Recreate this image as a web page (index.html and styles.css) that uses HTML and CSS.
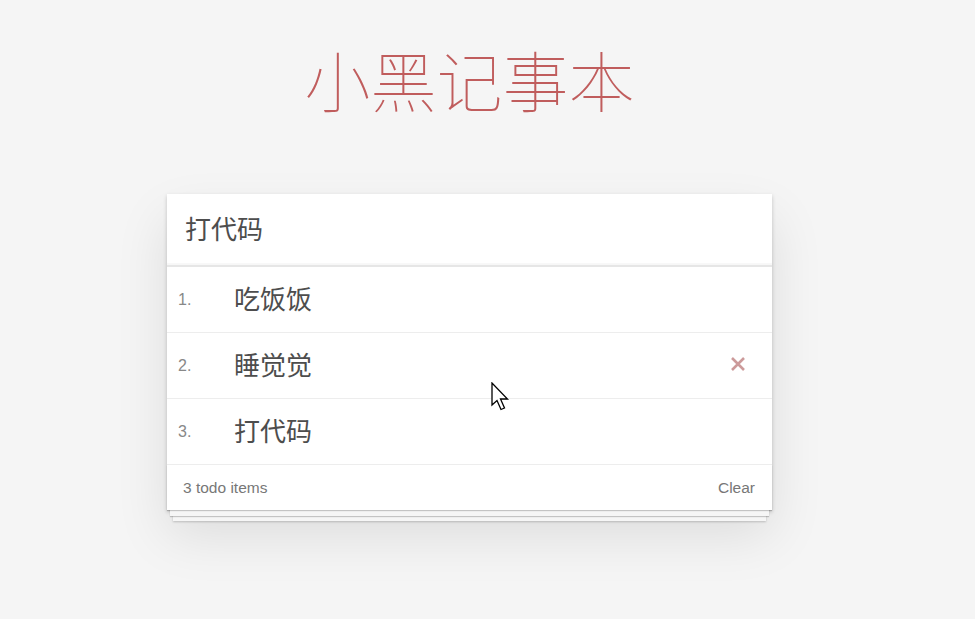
FILE: index.html
```html
<!DOCTYPE html>
<html lang="zh-CN">
<head>
<meta charset="utf-8">
<title>小黑记事本</title>
<link rel="stylesheet" href="styles.css">
</head>
<body>
<main class="app">
  <header class="header">
    <h1 class="title">小黑记事本</h1>
  </header>
  <section class="card">
    <div class="new-todo">打代码</div>
    <ul class="list">
      <li class="item"><span class="index">1.</span><span class="label">吃饭饭</span></li>
      <li class="item"><span class="index">2.</span><span class="label">睡觉觉</span>
        <span class="destroy"><svg width="16" height="16" viewBox="0 0 16 16"><path d="M2 2 L14 14 M14 2 L2 14" stroke="#cc9a9a" stroke-width="2.6" fill="none"/></svg></span>
      </li>
      <li class="item"><span class="index">3.</span><span class="label">打代码</span></li>
    </ul>
    <footer class="footer">
      <span class="count">3 todo items</span>
      <span class="clear">Clear</span>
    </footer>
  </section>
</main>
<svg class="cursor" width="20" height="29" viewBox="0 0 20 29"><path d="M1 1 L1 23 L6 18.5 L10 27.5 L13.5 26 L9.5 17 L16.5 17 Z" fill="#fff" stroke="#000" stroke-width="1.3" stroke-linejoin="miter"/></svg>
</body>
</html>
```
FILE: styles.css
```css
html, body {
  margin: 0;
  padding: 0;
}
body {
  background: #f5f5f5;
  font-family: "Liberation Sans", "Noto Sans CJK SC", sans-serif;
  color: #4d4d4d;
  height: 619px;
  overflow: hidden;
}
.app {
  width: 605px;
  margin-left: 167px;
}
.header {
  height: 194px;
  display: flex;
  justify-content: center;
}
.title {
  margin: 36px 0 0;
  font-family: "Noto Sans CJK SC", sans-serif;
  font-weight: 100;
  font-size: 66px;
  line-height: 84px;
  color: #c05d5d;
}
.card {
  position: relative;
  background: #fff;
  box-shadow: 0 2px 4px rgba(0,0,0,0.2), 0 25px 50px rgba(0,0,0,0.1);
}
.new-todo {
  height: 73px;
  box-sizing: border-box;
  padding-left: 18px;
  padding-bottom: 5px;
  display: flex;
  align-items: center;
  font-family: "Noto Sans CJK SC", sans-serif;
  font-size: 26px;
  color: #4d4d4d;
  border-bottom: 2px solid #e6e6e6;
  box-shadow: inset 0 -2px 1px rgba(0,0,0,0.03);
}
.list {
  list-style: none;
  margin: 0;
  padding: 0;
}
.item {
  height: 66px;
  box-sizing: border-box;
  border-bottom: 1px solid #ededed;
  display: flex;
  align-items: center;
  padding-left: 11px;
  padding-right: 26px;
}
.index {
  width: 56px;
  font-size: 16px;
  color: #888;
}
.label {
  flex: 1;
  font-family: "Noto Sans CJK SC", sans-serif;
  font-size: 26px;
  color: #4d4d4d;
  padding-bottom: 5px;
}
.destroy {
  display: flex;
  align-items: center;
  padding-bottom: 4px;
}
.footer {
  position: relative;
  height: 45px;
  box-sizing: border-box;
  display: flex;
  justify-content: space-between;
  align-items: center;
  padding: 1px 17px 0 16px;
  font-size: 15.5px;
  color: #777;
}
.footer::before {
  content: "";
  position: absolute;
  left: 0;
  right: 0;
  bottom: 0;
  height: 45px;
  box-shadow: 0 1px 1px rgba(0,0,0,0.2), 0 9px 0 -3px #f6f6f6, 0 10px 1px -3px rgba(0,0,0,0.2), 0 17px 0 -6px #f6f6f6, 0 18px 2px -6px rgba(0,0,0,0.2);
  z-index: 0;
}
.count, .clear {
  position: relative;
  z-index: 1;
}
.cursor {
  position: absolute;
  left: 491px;
  top: 382px;
}
```
